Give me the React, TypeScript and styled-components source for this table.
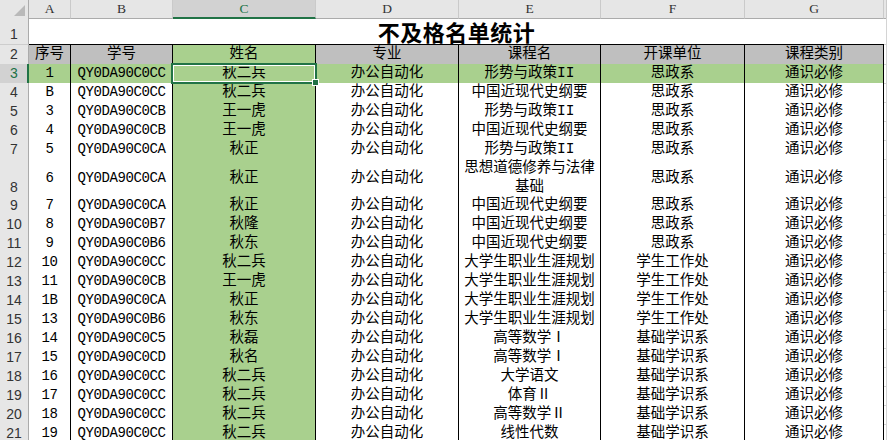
import React from 'react';
import styled, { createGlobalStyle } from 'styled-components';

const GREEN = '#a9d08e';
const HEAD_GRAY = '#bfbfbf';
const XL_GREEN = '#217346';
const COLS = '29px 42px 102px 143px 143px 142px 144px 139px 1fr';

const Global = createGlobalStyle`
  html, body { margin: 0; padding: 0; background: #fff; overflow: hidden; }
  #root { width: 887px; height: 440px; overflow: hidden; }
`;

const Sheet = styled.div`
  width: 887px;
  height: 440px;
  overflow: hidden;
  background: #fff;
  color: #000;
  font-family: "Liberation Mono", "Noto Sans CJK SC", monospace;
`;

const Row = styled.div<{ $h: number }>`
  display: grid;
  grid-template-columns: ${COLS};
  height: ${(p) => p.$h}px;
`;

const Corner = styled.div`
  box-sizing: border-box;
  background: #e6e6e6;
  border-right: 1px solid #ababab;
  border-bottom: 1px solid #ababab;
  display: flex;
  align-items: flex-end;
  justify-content: flex-end;
  padding: 0 3px 2px 0;
`;

const ColHead = styled.div<{ $sel?: boolean }>`
  box-sizing: border-box;
  background: ${(p) => (p.$sel ? '#d2d2d2' : '#e6e6e6')};
  color: ${(p) => (p.$sel ? XL_GREEN : '#333')};
  border-right: 1px solid #cacaca;
  border-bottom: ${(p) => (p.$sel ? `2px solid ${XL_GREEN}` : '1px solid #ababab')};
  display: flex;
  align-items: center;
  justify-content: center;
  font-family: "Liberation Serif", serif;
  font-size: 13.5px;
  padding-top: ${(p) => (p.$sel ? '1px' : '0')};
`;

const RowHead = styled.div<{ $sel?: boolean }>`
  box-sizing: border-box;
  background: ${(p) => (p.$sel ? '#d2d2d2' : '#e6e6e6')};
  color: ${(p) => (p.$sel ? XL_GREEN : '#333')};
  border-right: ${(p) => (p.$sel ? `2px solid ${XL_GREEN}` : '1px solid #ababab')};
  border-bottom: 1px solid #cdcdcd;
  display: flex;
  align-items: flex-end;
  justify-content: center;
  font-family: "Liberation Sans", Arial, sans-serif;
  font-size: 14px;
  line-height: 17px;
  padding-bottom: 1px;
  padding-left: ${(p) => (p.$sel ? '1px' : '0')};
`;

const TitleCell = styled.div`
  grid-column: 2 / 9;
  box-sizing: border-box;
  border-bottom: 1px solid #000;
  display: flex;
  align-items: center;
  justify-content: center;
  font-family: "Noto Sans CJK SC", sans-serif;
  font-weight: 700;
  font-size: 22px;
  line-height: 26px;
  letter-spacing: 0.5px;
`;

const Cell = styled.div<{ $bg?: string; $mono?: boolean }>`
  position: relative;
  box-sizing: border-box;
  background: ${(p) => p.$bg || '#fff'};
  border-right: 1px solid #000;
  border-bottom: 1px solid #000;
  display: flex;
  align-items: center;
  justify-content: center;
  text-align: center;
  white-space: pre-line;
  font-size: ${(p) => (p.$mono ? '14px' : '14.5px')};
  letter-spacing: ${(p) => (p.$mono ? '-0.4px' : '0')};
  line-height: 19px;
  padding: 0 2px;
`;

const Blank = styled.div`
  box-sizing: border-box;
  border-right: 1px solid #d4d4d4;
  border-bottom: 1px solid #d4d4d4;
`;

const Selection = styled.div`
  position: absolute;
  left: -2px;
  top: -1px;
  width: 146px;
  height: 21px;
  box-sizing: border-box;
  border: 2px solid ${XL_GREEN};
  box-shadow: inset 0 0 0 1px #fff;
  z-index: 2;
  pointer-events: none;
`;

const Handle = styled.div`
  position: absolute;
  right: -4px;
  bottom: -4px;
  width: 5px;
  height: 5px;
  background: ${XL_GREEN};
  border: 1px solid #fff;
`;

const letters = ['A', 'B', 'C', 'D', 'E', 'F', 'G', ''];
const headers = ['序号', '学号', '姓名', '专业', '课程名', '开课单位', '课程类别'];

type Rec = [string, string, string, string, string, string, string];
const rows: Rec[] = [
  ['1', 'QY0DA90C0CC', '秋二兵', '办公自动化', '形势与政策II', '思政系', '通识必修'],
  ['B', 'QY0DA90C0CC', '秋二兵', '办公自动化', '中国近现代史纲要', '思政系', '通识必修'],
  ['3', 'QY0DA90C0CB', '王一虎', '办公自动化', '形势与政策II', '思政系', '通识必修'],
  ['4', 'QY0DA90C0CB', '王一虎', '办公自动化', '中国近现代史纲要', '思政系', '通识必修'],
  ['5', 'QY0DA90C0CA', '秋正', '办公自动化', '形势与政策II', '思政系', '通识必修'],
  ['6', 'QY0DA90C0CA', '秋正', '办公自动化', '思想道德修养与法律\n基础', '思政系', '通识必修'],
  ['7', 'QY0DA90C0CA', '秋正', '办公自动化', '中国近现代史纲要', '思政系', '通识必修'],
  ['8', 'QY0DA90C0B7', '秋隆', '办公自动化', '中国近现代史纲要', '思政系', '通识必修'],
  ['9', 'QY0DA90C0B6', '秋东', '办公自动化', '中国近现代史纲要', '思政系', '通识必修'],
  ['10', 'QY0DA90C0CC', '秋二兵', '办公自动化', '大学生职业生涯规划', '学生工作处', '通识必修'],
  ['11', 'QY0DA90C0CB', '王一虎', '办公自动化', '大学生职业生涯规划', '学生工作处', '通识必修'],
  ['1B', 'QY0DA90C0CA', '秋正', '办公自动化', '大学生职业生涯规划', '学生工作处', '通识必修'],
  ['13', 'QY0DA90C0B6', '秋东', '办公自动化', '大学生职业生涯规划', '学生工作处', '通识必修'],
  ['14', 'QY0DA90C0C5', '秋磊', '办公自动化', '高等数学Ⅰ', '基础学识系', '通识必修'],
  ['15', 'QY0DA90C0CD', '秋名', '办公自动化', '高等数学Ⅰ', '基础学识系', '通识必修'],
  ['16', 'QY0DA90C0CC', '秋二兵', '办公自动化', '大学语文', '基础学识系', '通识必修'],
  ['17', 'QY0DA90C0CC', '秋二兵', '办公自动化', '体育Ⅱ', '基础学识系', '通识必修'],
  ['18', 'QY0DA90C0CC', '秋二兵', '办公自动化', '高等数学Ⅱ', '基础学识系', '通识必修'],
  ['19', 'QY0DA90C0CC', '秋二兵', '办公自动化', '线性代数', '基础学识系', '通识必修'],
];

export default function App() {
  return (
    <>
      <Global />
      <Sheet>
        <Row $h={18}>
          <Corner>
            <svg width="11" height="11" viewBox="0 0 11 11">
              <polygon points="0,11 11,0 11,11" fill="#b9b9b9" />
            </svg>
          </Corner>
          {letters.map((l, i) => (
            <ColHead key={i} $sel={l === 'C'}>{l}</ColHead>
          ))}
        </Row>
        <Row $h={27}>
          <RowHead>1</RowHead>
          <TitleCell>不及格名单统计</TitleCell>
          <Blank />
        </Row>
        <Row $h={19}>
          <RowHead>2</RowHead>
          {headers.map((h, i) => (
            <Cell key={h} $bg={i === 2 ? GREEN : HEAD_GRAY}>{h}</Cell>
          ))}
          <Blank />
        </Row>
        {rows.map((r, ri) => {
          const rowNum = ri + 3;
          const selRow = rowNum === 3;
          return (
            <Row key={rowNum} $h={rowNum === 8 ? 37 : 19}>
              <RowHead $sel={selRow}>{rowNum}</RowHead>
              {r.map((v, ci) => (
                <Cell key={ci} $mono={ci < 2} $bg={selRow || ci === 2 ? GREEN : '#fff'}>
                  {v}
                  {selRow && ci === 2 && (
                    <Selection>
                      <Handle />
                    </Selection>
                  )}
                </Cell>
              ))}
              <Blank />
            </Row>
          );
        })}
      </Sheet>
    </>
  );
}
